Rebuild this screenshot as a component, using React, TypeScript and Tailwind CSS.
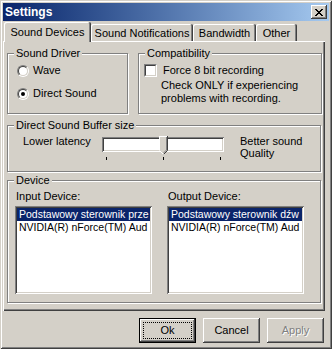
import type { ReactNode } from "react";

const raised =
  "shadow-[inset_-1px_-1px_#404040,inset_1px_1px_#fff,inset_-2px_-2px_#808080]";
const sunken =
  "shadow-[inset_1px_1px_#808080,inset_-1px_-1px_#fff,inset_2px_2px_#404040,inset_-2px_-2px_#d4d0c8]";

function Group({
  title,
  className,
  children,
}: {
  title: string;
  className: string;
  children: ReactNode;
}) {
  return (
    <fieldset
      className={`m-0 min-w-0 border border-[#808080] p-0 shadow-[inset_1px_1px_#fff,1px_1px_#fff] ${className}`}
    >
      <legend className="ml-[6px] bg-[#d4d0c8] px-[2px] leading-[13px]">
        {title}
      </legend>
      {children}
    </fieldset>
  );
}

function Radio({ label, checked }: { label: string; checked?: boolean }) {
  return (
    <div className="flex h-[13px] items-center">
      <span className="flex h-[12px] w-[12px] rounded-full border border-t-[#808080] border-r-white border-b-white border-l-[#808080]">
        <span className="flex flex-1 items-center justify-center rounded-full border border-t-[#404040] border-r-[#d4d0c8] border-b-[#d4d0c8] border-l-[#404040] bg-white">
          {checked && <span className="block h-[4px] w-[4px] rounded-full bg-black" />}
        </span>
      </span>
      <span className="ml-[4px] leading-[13px]">{label}</span>
    </div>
  );
}

// the list is narrower than the device names, so only the visible part is kept
function ListBox({ items }: { items: string[] }) {
  return (
    <div className={`h-[88px] w-[137px] overflow-hidden bg-white p-[2px] ${sunken}`}>
      {items.map((it, i) => (
        <div
          key={it}
          className={`h-[13px] overflow-hidden whitespace-nowrap pl-[2px] text-[10.5px] leading-[13px] ${
            i === 0 ? "bg-[#0a246a] text-white" : ""
          }`}
        >
          {it}
        </div>
      ))}
    </div>
  );
}

function Button({
  label,
  isDefault,
  disabled,
}: {
  label: string;
  isDefault?: boolean;
  disabled?: boolean;
}) {
  if (isDefault) {
    return (
      <div className="flex h-[25px] w-[57px] border border-black bg-[#d4d0c8]">
        <div className={`flex flex-1 p-[3px] ${raised}`}>
          <div className="flex flex-1 items-center justify-center border border-dotted border-black leading-[13px]">
            {label}
          </div>
        </div>
      </div>
    );
  }
  return (
    <div
      className={`flex h-[25px] w-[57px] items-center justify-center bg-[#d4d0c8] leading-[13px] ${raised} ${
        disabled ? "text-[#808080] [text-shadow:1px_1px_#fff]" : ""
      }`}
    >
      {label}
    </div>
  );
}

const TABS = [
  { label: "Sound Devices", w: "w-[87px]" },
  { label: "Sound Notifications", w: "w-[102px]" },
  { label: "Bandwidth", w: "w-[63px]" },
  { label: "Other", w: "w-[41px]" },
];

export default function App() {
  return (
    <div className="flex h-[349px] w-[332px] flex-col bg-[#d4d0c8] p-[3px] font-['Liberation_Sans',Arial,sans-serif] text-[11px] text-black shadow-[inset_1px_1px_#d4d0c8,inset_-1px_-1px_#404040,inset_2px_2px_#fff,inset_-2px_-2px_#808080]">
      {/* Title bar */}
      <div className="flex h-[18px] items-center bg-linear-to-r from-[#0a246a] to-[#a6caf0] pl-[2px] pr-[2px]">
        <span className="flex-1 text-[12px] font-bold leading-[18px] text-white">
          Settings
        </span>
        <div className={`flex h-[14px] w-[16px] items-center justify-center bg-[#d4d0c8] ${raised}`}>
          <svg width="8" height="7" viewBox="0 0 8 7" shapeRendering="crispEdges">
            <path
              d="M0 0h2v1H0zM6 0h2v1H6zM1 1h2v1H1zM5 1h2v1H5zM2 2h4v1H2zM3 3h2v1H3zM2 4h4v1H2zM1 5h2v1H1zM5 5h2v1H5zM0 6h2v1H0zM6 6h2v1H6z"
              fill="#000"
            />
          </svg>
        </div>
      </div>

      {/* Tabs */}
      <div className="mt-[1px] flex h-[19px] items-end">
        {TABS.map((t, i) =>
          i === 0 ? (
            <div
              key={t.label}
              className={`relative z-10 mb-[-1px] ml-[1px] flex h-[20px] ${t.w} items-center justify-center rounded-t-[2px] bg-[#d4d0c8] shadow-[inset_-1px_0_#404040,inset_1px_1px_#fff,inset_-2px_0_#808080]`}
            >
              {t.label}
            </div>
          ) : (
            <div
              key={t.label}
              className={`flex h-[17px] ${t.w} justify-center rounded-t-[2px] pt-[3px] leading-[13px] shadow-[inset_-1px_0_#404040,inset_1px_1px_#fff,inset_-2px_0_#808080]`}
            >
              {t.label}
            </div>
          )
        )}
      </div>

      {/* Tab page */}
      <div className="flex h-[270px] w-[322px] flex-col pl-[4px] pt-[6px] shadow-[inset_1px_1px_#fff,inset_-1px_-1px_#404040,inset_-2px_-2px_#808080]">
        <div className="flex gap-[10px]">
          <Group title="Sound Driver" className="h-[67px] w-[121px]">
            <div className="flex flex-col gap-[10px] pl-[9px] pt-[4px]">
              <Radio label="Wave" />
              <Radio label="Direct Sound" checked />
            </div>
          </Group>
          <Group title="Compatibility" className="h-[67px] w-[184px]">
            <div className="pl-[5px] pt-[4px]">
              <div className="flex h-[13px] items-center">
                <span className="flex h-[13px] w-[13px] border border-t-[#808080] border-r-white border-b-white border-l-[#808080]">
                  <span className="flex-1 border border-t-[#404040] border-r-[#d4d0c8] border-b-[#d4d0c8] border-l-[#404040] bg-white" />
                </span>
                <span className="ml-[6px] leading-[13px]">Force 8 bit recording</span>
              </div>
              <div className="ml-[17px] mt-[2px] leading-[13px]">
                <div>Check ONLY if experiencing</div>
                <div>problems with recording.</div>
              </div>
            </div>
          </Group>
        </div>

        <Group title="Direct Sound Buffer size" className="mt-[5px] h-[53px] w-[314px]">
          <div className="flex pl-[15px]">
            <div className="mt-[3px] w-[79px] leading-[13px]">Lower latency</div>
            <div className="relative mt-[5px] h-[25px] w-[122px]">
              <div className={`h-[15px] bg-white ${sunken}`} />
              <svg
                className="absolute left-[57px] top-[-1px]"
                width="9"
                height="19"
                viewBox="0 0 9 19"
                shapeRendering="crispEdges"
              >
                <path d="M0 0H9V14L4.5 18.5L0 14Z" fill="#d4d0c8" />
                <path d="M0.5 14V0.5H8" stroke="#fff" fill="none" />
                <path d="M8.5 0V14.5L4.5 18.5" stroke="#404040" fill="none" shapeRendering="auto" />
                <path d="M7.5 1V14L4.5 17" stroke="#808080" fill="none" shapeRendering="auto" />
                <path d="M0.5 14.5L4.5 18.5" stroke="#fff" fill="none" shapeRendering="auto" />
              </svg>
              <span className="absolute left-[4px] top-[20px] h-[3px] w-[1px] bg-black" />
              <span className="absolute left-[61px] top-[20px] h-[3px] w-[1px] bg-black" />
              <span className="absolute left-[118px] top-[20px] h-[3px] w-[1px] bg-black" />
            </div>
            <div className="ml-[16px] mt-[3px] leading-[12px]">
              <div>Better sound</div>
              <div>Quality</div>
            </div>
          </div>
        </Group>

        <Group title="Device" className="mt-[2px] h-[129px] w-[314px]">
          <div className="flex gap-[15px] pl-[7px]">
            <div className="flex flex-col">
              <div className="ml-[1px] mt-[3px] leading-[13px]">Input Device:</div>
              <div className="mt-[3px]">
                <ListBox items={["Podstawowy sterownik prze", "NVIDIA(R) nForce(TM) Aud"]} />
              </div>
            </div>
            <div className="flex flex-col">
              <div className="ml-[1px] mt-[3px] leading-[13px]">Output Device:</div>
              <div className="mt-[3px]">
                <ListBox items={["Podstawowy sterownik dźw", "NVIDIA(R) nForce(TM) Aud"]} />
              </div>
            </div>
          </div>
        </Group>
      </div>

      {/* Buttons */}
      <div className="mr-[5px] mt-[7px] flex justify-end gap-[7px]">
        <Button label="Ok" isDefault />
        <Button label="Cancel" />
        <Button label="Apply" disabled />
      </div>
    </div>
  );
}
